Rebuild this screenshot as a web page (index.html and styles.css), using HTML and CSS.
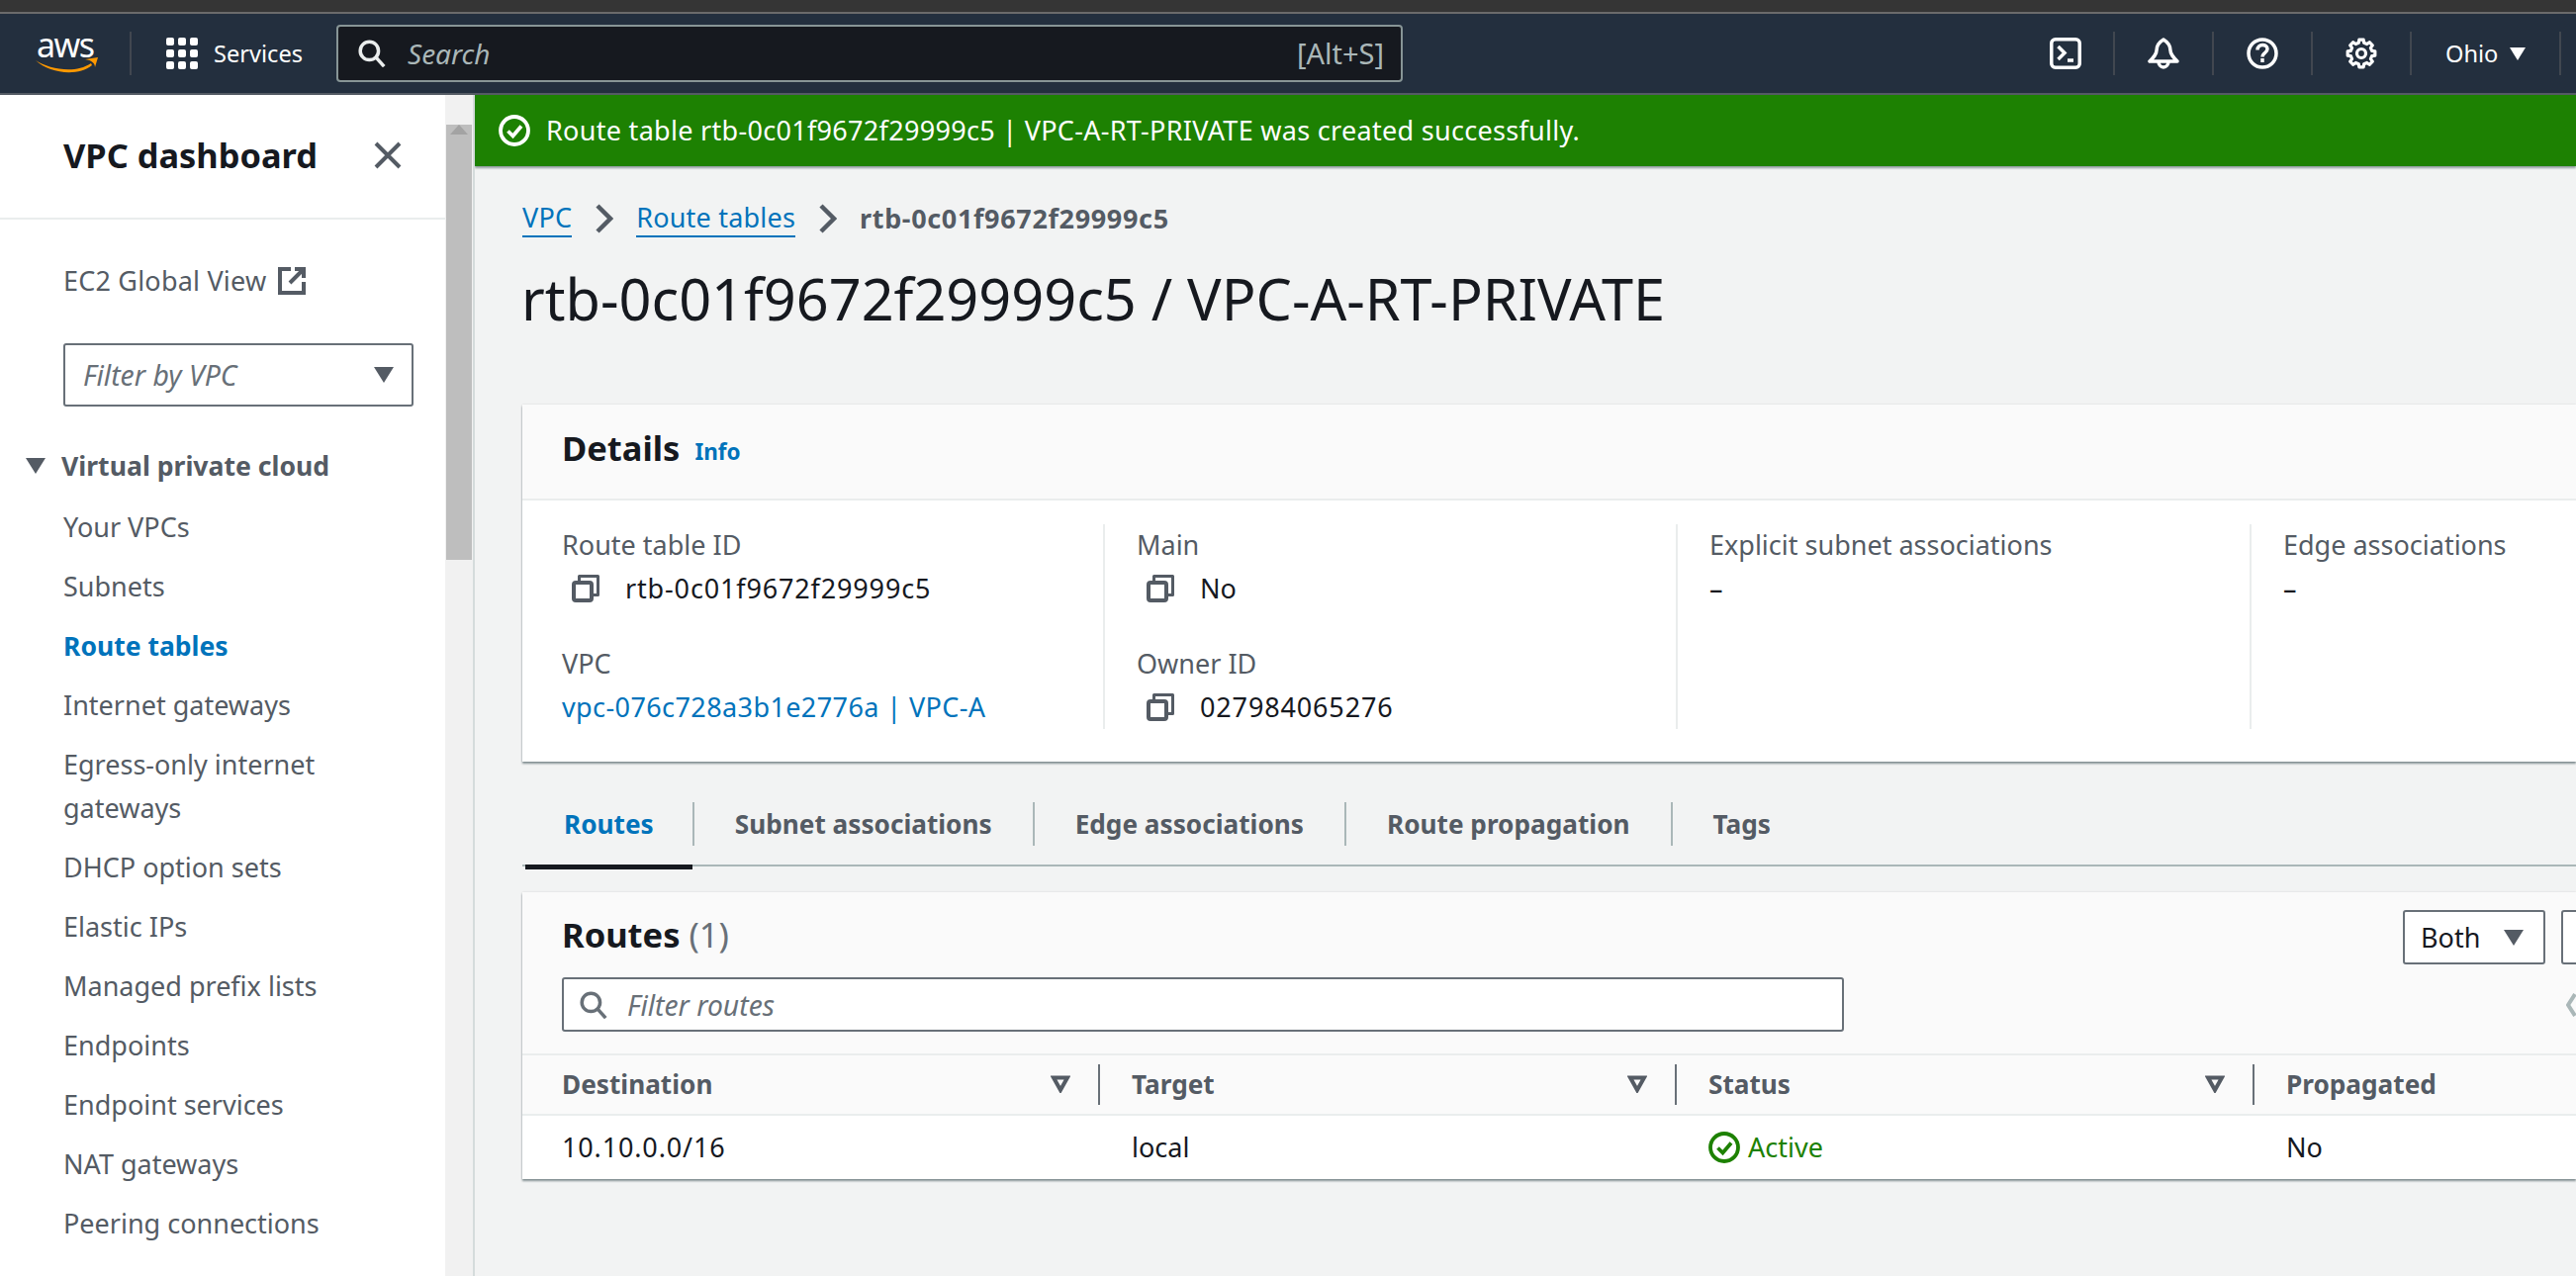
FILE: index.html
```html
<!DOCTYPE html>
<html lang="en">
<head>
  <meta charset="utf-8">
  <title>Route table - VPC-A-RT-PRIVATE</title>
  <link rel="stylesheet" href="styles.css">
</head>
<body>
  <div class="chrome-strip"></div>

  <!-- top navigation -->
  <header class="topnav">
    <div class="logo">
      <span class="logo-text">aws</span>
      <svg class="logo-smile" viewBox="0 0 64 16" fill="#f90"><path d="M0 3C14 12 40 17 56 6l1 2C42 20 14 16 0 3z"/><path d="M50 2l13-2-3 10c0-4-3-7-10-8z"/></svg>
    </div>
    <div class="services">
      <svg class="grid-icon" viewBox="0 0 32 32" fill="#fff">
        <rect x="0" y="0" width="8" height="8" rx="2"/><rect x="12" y="0" width="8" height="8" rx="2"/><rect x="24" y="0" width="8" height="8" rx="2"/>
        <rect x="0" y="12" width="8" height="8" rx="2"/><rect x="12" y="12" width="8" height="8" rx="2"/><rect x="24" y="12" width="8" height="8" rx="2"/>
        <rect x="0" y="24" width="8" height="8" rx="2"/><rect x="12" y="24" width="8" height="8" rx="2"/><rect x="24" y="24" width="8" height="8" rx="2"/>
      </svg>
      <span>Services</span>
    </div>
    <div class="nav-search">
      <svg class="search-icon" viewBox="0 0 32 32" fill="none" stroke="#eaeded" stroke-width="4"><circle cx="13" cy="13" r="10.500"/><path d="M21 21l9 10"/></svg>
      <span class="nav-search-text">Search</span>
      <span class="nav-search-key">[Alt+S]</span>
    </div>
    <div class="nav-right">
      <div class="nav-item nav-item-first">
        <svg viewBox="0 0 32 32" fill="none" stroke="#fff" stroke-width="3.500"><rect x="1.750" y="1.750" width="28.500" height="28.500" rx="4"/><path d="M8.500 9l6.500 6.500L8.500 22M18 23h6"/></svg>
      </div>
      <div class="nav-item">
        <svg viewBox="0 0 32 32" fill="none" stroke="#fff" stroke-width="3.500" stroke-linejoin="round"><path d="M16 2c-5 3-7 7-7 11 0 4-3 7-7 11h28c-4-4-7-7-7-11 0-4-2-8-7-11z"/><path d="M11 24a5 6 0 0 0 10 0"/></svg>
      </div>
      <div class="nav-item">
        <svg viewBox="0 0 32 32" fill="none" stroke="#fff" stroke-width="3.500"><circle cx="16" cy="16" r="14"/><path d="M11 12.500c0-6.500 10-6.500 10-1 0 4-5 4-5 8"/><path d="M16 21v4"/></svg>
      </div>
      <div class="nav-item">
        <svg viewBox="0 0 32 32" fill="none" stroke="#fff" stroke-width="3.200" stroke-linejoin="round">
          <circle cx="16" cy="16" r="4.500"/>
          <polygon transform="translate(16 16)" points="10.67,-2.66 13.83,-2.19 13.83,2.19 10.67,2.66 9.43,5.66 11.33,8.23 8.23,11.33 5.66,9.43 2.66,10.67 2.19,13.83 -2.19,13.83 -2.66,10.67 -5.66,9.43 -8.23,11.33 -11.33,8.23 -9.43,5.66 -10.67,2.66 -13.83,2.19 -13.83,-2.19 -10.67,-2.66 -9.43,-5.66 -11.33,-8.23 -8.23,-11.33 -5.66,-9.43 -2.66,-10.67 -2.19,-13.83 2.19,-13.83 2.66,-10.67 5.66,-9.43 8.23,-11.33 11.33,-8.23 9.43,-5.66"/>
        </svg>
      </div>
      <div class="nav-item nav-region">
        <span>Ohio</span>
        <svg class="caret" viewBox="0 0 16 14" fill="#fff"><path d="M0 1h16L8 14z"/></svg>
      </div>
    </div>
  </header>

  <div class="shell">
    <!-- side navigation -->
    <aside class="sidebar">
      <div class="side-head">
        <span class="side-title">VPC dashboard</span>
        <svg class="side-close" viewBox="0 0 28 28" fill="none" stroke="#545b64" stroke-width="4"><path d="M2 2l24 24M26 2L2 26"/></svg>
      </div>
      <div class="side-body">
        <div class="side-global">
          <span>EC2 Global View</span>
          <svg class="external-icon" viewBox="0 0 28 28" fill="none" stroke="#545b64" stroke-width="4"><path d="M13 2H2v24h24V15"/><path d="M12 16L26 2M17 2h9v9"/></svg>
        </div>
        <div class="side-select">
          <span>Filter by VPC</span>
          <svg class="side-caret" viewBox="0 0 20 16" fill="#545b64"><path d="M0 0h20L10 16z"/></svg>
        </div>
        <div class="side-section">
          <svg class="side-caret side-caret-section" viewBox="0 0 20 16" fill="#545b64"><path d="M0 0h20L10 16z"/></svg>
          <span>Virtual private cloud</span>
        </div>
        <ul class="side-list">
          <li>Your VPCs</li>
          <li>Subnets</li>
          <li class="active">Route tables</li>
          <li>Internet gateways</li>
          <li>Egress-only internet gateways</li>
          <li>DHCP option sets</li>
          <li>Elastic IPs</li>
          <li>Managed prefix lists</li>
          <li>Endpoints</li>
          <li>Endpoint services</li>
          <li>NAT gateways</li>
          <li>Peering connections</li>
        </ul>
      </div>
    </aside>

    <div class="scrollbar">
      <div class="scroll-up"></div>
      <div class="scroll-thumb"></div>
    </div>

    <main class="main">
      <div class="banner">
        <svg class="banner-icon" viewBox="0 0 32 32" fill="none" stroke="#fff" stroke-width="3.800"><circle cx="16" cy="16" r="14"/><path d="M9.500 16.500l5 5 8.500-10"/></svg>
        <span>Route table rtb-0c01f9672f29999c5 | VPC-A-RT-PRIVATE was created successfully.</span>
      </div>

      <div class="content">
        <nav class="crumbs">
          <a>VPC</a>
          <svg class="crumb-sep" viewBox="0 0 19 30" fill="none" stroke="#545b64" stroke-width="4.500"><path d="M3 2l13 13L3 28"/></svg>
          <a>Route tables</a>
          <svg class="crumb-sep" viewBox="0 0 19 30" fill="none" stroke="#545b64" stroke-width="4.500"><path d="M3 2l13 13L3 28"/></svg>
          <span class="crumb-current">rtb-0c01f9672f29999c5</span>
        </nav>

        <h1 class="page-title">rtb-0c01f9672f29999c5 / VPC-A-RT-PRIVATE</h1>

        <section class="card details">
          <div class="card-head details-head">
            <h2>Details</h2>
            <span class="info">Info</span>
          </div>
          <div class="details-body">
            <div class="details-col">
              <div class="field">
                <div class="field-label">Route table ID</div>
                <div class="field-value">
                  <svg class="copy-icon" viewBox="0 0 28 28"><use href="#copy"/></svg>
                  <span class="num">rtb-0c01f9672f29999c5</span>
                </div>
              </div>
              <div class="field">
                <div class="field-label">VPC</div>
                <div class="field-value field-link">vpc-076c728a3b1e2776a | VPC-A</div>
              </div>
            </div>
            <div class="details-col">
              <div class="field">
                <div class="field-label">Main</div>
                <div class="field-value">
                  <svg class="copy-icon" viewBox="0 0 28 28"><use href="#copy"/></svg>
                  <span>No</span>
                </div>
              </div>
              <div class="field">
                <div class="field-label">Owner ID</div>
                <div class="field-value">
                  <svg class="copy-icon" viewBox="0 0 28 28"><use href="#copy"/></svg>
                  <span class="num">027984065276</span>
                </div>
              </div>
            </div>
            <div class="details-col">
              <div class="field">
                <div class="field-label">Explicit subnet associations</div>
                <div class="field-value field-plain">–</div>
              </div>
            </div>
            <div class="details-col details-col-last">
              <div class="field">
                <div class="field-label">Edge associations</div>
                <div class="field-value field-plain">–</div>
              </div>
            </div>
          </div>
        </section>

        <div class="tabs">
          <div class="tab tab-active">Routes</div>
          <div class="tab">Subnet associations</div>
          <div class="tab">Edge associations</div>
          <div class="tab">Route propagation</div>
          <div class="tab tab-last">Tags</div>
        </div>

        <section class="card routes">
          <div class="routes-head">
            <div class="routes-top">
              <h2>Routes <span class="count">(1)</span></h2>
              <div class="routes-actions">
                <div class="small-select">
                  <span>Both</span>
                  <svg class="side-caret" viewBox="0 0 20 16" fill="#545b64"><path d="M0 0h20L10 16z"/></svg>
                </div>
                <div class="small-select small-select-cut"></div>
              </div>
            </div>
            <div class="routes-filter-row">
              <div class="filter">
                <svg class="filter-icon" viewBox="0 0 32 32" fill="none" stroke="#687078" stroke-width="4"><circle cx="13" cy="13" r="10.500"/><path d="M21 21l9 10"/></svg>
                <span>Filter routes</span>
              </div>
              <svg class="pager-prev" viewBox="0 0 10 26" fill="none" stroke="#aab7b8" stroke-width="4"><path d="M9 2L2 13l7 11"/></svg>
            </div>
          </div>
          <div class="table">
            <div class="th">
              <span>Destination</span>
              <svg class="sort-icon" viewBox="0 0 20 18" fill="none" stroke="#545b64" stroke-width="4"><path d="M3 2.500h14L10 15z"/></svg>
            </div>
            <div class="th">
              <span>Target</span>
              <svg class="sort-icon" viewBox="0 0 20 18" fill="none" stroke="#545b64" stroke-width="4"><path d="M3 2.500h14L10 15z"/></svg>
            </div>
            <div class="th">
              <span>Status</span>
              <svg class="sort-icon" viewBox="0 0 20 18" fill="none" stroke="#545b64" stroke-width="4"><path d="M3 2.500h14L10 15z"/></svg>
            </div>
            <div class="th th-last"><span>Propagated</span></div>
            <div class="td"><span class="num">10.10.0.0/16</span></div>
            <div class="td">local</div>
            <div class="td td-status">
              <svg class="status-icon" viewBox="0 0 32 32" fill="none" stroke="#1d8102" stroke-width="3.800"><circle cx="16" cy="16" r="14"/><path d="M9.500 16.500l5 5 8.500-10"/></svg>
              <span>Active</span>
            </div>
            <div class="td">No</div>
          </div>
        </section>
      </div>
    </main>
  </div>

  <!-- shared copy icon -->
  <svg class="defs" width="0" height="0">
    <symbol id="copy" viewBox="0 0 28 28">
      <rect x="2" y="8" width="18" height="18" rx="2" fill="none" stroke="#545b64" stroke-width="4"/>
      <path d="M7.500 6V1.500h19v19H22" fill="none" stroke="#545b64" stroke-width="3" stroke-linejoin="round"/>
    </symbol>
  </svg>
</body>
</html>
```
FILE: styles.css
```css
* { box-sizing: border-box; }
html, body { margin: 0; padding: 0; }
body {
  width: 2604px;
  height: 1290px;
  overflow: hidden;
  background: #f2f3f3;
  color: #16191f;
  font-family: "Noto Sans", "Open Sans", sans-serif;
  font-size: 27px;
  line-height: 44px;
}
h1, h2, ul { margin: 0; padding: 0; font-weight: 700; }
.defs { position: absolute; }
.num { letter-spacing: .85px; }

.chrome-strip { height: 14px; background: #353535; border-bottom: 2px solid #6b6b6b; }

/* top navigation */
.topnav {
  height: 82px;
  display: flex;
  align-items: center;
  background: #232f3e;
  border-bottom: 2px solid #545b64;
  color: #fff;
  font-size: 23.600px;
}
.logo {
  width: 133px;
  height: 44px;
  padding-left: 37px;
  border-right: 2px solid #414750;
  display: flex;
  flex-direction: column;
  flex-shrink: 0;
}
.logo-text { font-size: 34px; line-height: 26px; height: 26px; letter-spacing: -1.500px; }
.logo-smile { width: 64px; height: 16px; margin-left: -1px; }
.services { display: flex; align-items: center; margin-left: 35px; width: 172px; flex-shrink: 0; }
.grid-icon { width: 32px; height: 32px; margin-right: 16px; }
.nav-search {
  width: 1078px;
  height: 58px;
  display: flex;
  align-items: center;
  padding: 0 17px 0 20px;
  background: #16191f;
  border: 2px solid #879596;
  border-radius: 4px;
  flex-shrink: 0;
}
.search-icon { width: 28px; height: 28px; margin-right: 22px; }
.nav-search-text { font-style: italic; color: #aab7b8; font-size: 28px; flex: 1; }
.nav-search-key { color: #aab7b8; font-size: 29px; }
.nav-right { margin-left: auto; display: flex; align-items: center; margin-right: 15px; }
.nav-item {
  width: 100px;
  height: 44px;
  display: flex;
  align-items: center;
  justify-content: center;
  border-left: 2px solid #414750;
}
.nav-item svg { width: 32px; height: 32px; }
.nav-item-first { border-left: 0; width: 70px; justify-content: flex-start; padding-left: 6px; }
.nav-region { width: 153px; justify-content: flex-start; padding-left: 34px; border-right: 2px solid #414750; }
.nav-region .caret { width: 16px; height: 14px; margin-left: 12px; }

/* page shell */
.shell { display: flex; height: 1194px; }

/* side navigation */
.sidebar { width: 450px; flex-shrink: 0; background: #fff; color: #545b64; overflow: hidden; }
.side-head {
  height: 126px;
  padding: 0 44px 2px 64px;
  display: flex;
  align-items: center;
  justify-content: space-between;
  border-bottom: 2px solid #eaeded;
}
.side-title { font-size: 34.400px; font-weight: 700; color: #16191f; }
.side-close { width: 28px; height: 28px; }
.side-body { padding: 40px 32px 0 64px; }
.side-global { display: flex; align-items: center; height: 44px; letter-spacing: .2px; }
.external-icon { width: 28px; height: 28px; margin-left: 12px; }
.side-select {
  margin-top: 41px;
  height: 64px;
  width: 354px;
  padding: 0 18px;
  display: flex;
  align-items: center;
  justify-content: space-between;
  border: 2px solid #687078;
  border-radius: 3px;
  font-style: italic;
  font-size: 28.400px;
  color: #687078;
}
.side-caret { width: 20px; height: 16px; flex-shrink: 0; }
.side-section {
  margin: 38px 0 0 -38px;
  height: 44px;
  display: flex;
  align-items: center;
  font-weight: 700;
  font-size: 26.600px;
}
.side-caret-section { margin-right: 16px; }
.side-list { list-style: none; margin-top: 10px; font-weight: 400; }
.side-list li { padding: 8px 0; }
.side-list .active { color: #0073bb; font-weight: 700; font-size: 26.500px; }

.scrollbar { width: 30px; flex-shrink: 0; background: #f1f1f1; border-right: 2px solid #d5dbdb; }
.scroll-up {
  height: 30px;
  width: 0;
  margin: 0 auto;
  border: 9px solid transparent;
  border-top: 0;
  border-bottom: 10px solid #a3a3a3;
  transform: translateY(10px);
}
.scroll-thumb { width: 26px; margin: 0 0 0 1px; height: 440px; background: #bebebe; }

/* main */
.main { flex: 1; min-width: 0; overflow: hidden; }
.banner {
  height: 72px;
  display: flex;
  align-items: center;
  padding-left: 24px;
  background: #1d8102;
  color: #fff;
  letter-spacing: .3px;
  box-shadow: 0 2px 2px rgba(0, 28, 36, .4);
}
.banner-icon { width: 32px; height: 32px; margin-right: 16px; }
.content { padding: 31px 0 0 48px; width: 2124px; }
a { color: #0073bb; text-decoration: none; border-bottom: 2px solid #0073bb; line-height: 36px; letter-spacing: .2px; }
.crumbs { display: flex; align-items: center; height: 44px; }
.crumb-sep { width: 19px; height: 30px; margin: 0 23px; }
.crumb-current { color: #545b64; font-weight: 700; letter-spacing: .65px; }
.page-title { font-size: 57.600px; line-height: 64px; font-weight: 400; margin-top: 27px; white-space: nowrap; margin-left: -1px; }

.card { background: #fff; box-shadow: 0 2px 2px rgba(0, 28, 36, .45), 0 0 2px rgba(0, 28, 36, .12); }
.details { margin-top: 75px; height: 361px; }
.card-head { background: #fafafa; border-bottom: 2px solid #eaeded; }
.details-head { height: 97px; padding: 0 40px 8px; display: flex; align-items: center; }
h2 { font-size: 34.500px; line-height: 52px; }
.info { color: #0073bb; font-size: 22.500px; font-weight: 700; margin: 8px 0 0 15px; }
.details-body { display: grid; grid-template-columns: 589px 579px 580px 1fr; padding-top: 24px; }
.details-col { height: 207px; padding-left: 32px; border-right: 2px solid #eaeded; }
.details-col:first-child { padding-left: 40px; }
.details-col-last { border-right: 0; }
.field { height: 120px; }
.field-label { color: #545b64; height: 43px; line-height: 42px; }
.field-value { display: flex; align-items: center; height: 44px; padding-left: 10px; }
.field-plain { padding-left: 0; }
.field-link { padding-left: 0; color: #0073bb; letter-spacing: .4px; }
.copy-icon { width: 28px; height: 28px; margin-right: 26px; }

/* tabs */
.tabs { display: flex; margin-top: 20px; height: 86px; padding: 2px 0 0 3px; border-bottom: 2px solid #aab7b8; align-items: center; }
.tab { height: 44px; padding: 0 41px; font-weight: 700; font-size: 26.200px; color: #545b64; border-right: 2px solid #aab7b8; white-space: nowrap; }
.tab-last { border-right: 0; }
.tab-active { padding: 0 39px; color: #0073bb; position: relative; }
.tab-active::after { content: ""; position: absolute; left: 0; right: 0; bottom: -24px; height: 5px; background: #16191f; }

/* routes table */
.routes { margin-top: 26px; }
.routes-head { height: 163px; background: #fafafa; padding: 0 0 0 40px; }
.routes-top { height: 86px; display: flex; align-items: center; justify-content: space-between; }
.count { font-weight: 400; color: #687078; }
.routes-actions { display: flex; gap: 16px; margin: 5px -65px 0 0; }
.small-select {
  width: 144px;
  height: 55px;
  padding: 0 20px 0 16px;
  display: flex;
  align-items: center;
  justify-content: space-between;
  background: #fff;
  border: 2px solid #687078;
  border-radius: 3px;
}
.small-select-cut { width: 80px; }
.routes-filter-row { display: flex; align-items: center; }
.filter {
  width: 1297px;
  height: 55px;
  padding: 0 16px;
  display: flex;
  align-items: center;
  background: #fff;
  border: 2px solid #687078;
  border-radius: 3px;
  font-style: italic;
  font-size: 28.300px;
  color: #687078;
}
.filter-icon { width: 28px; height: 28px; margin-right: 20px; }
.pager-prev { width: 10px; height: 26px; margin-left: 730px; }
.table { display: grid; grid-template-columns: 584px 583px 584px 1fr; }
.th {
  height: 63px;
  padding: 0 30px 2px 32px;
  display: flex;
  align-items: center;
  justify-content: space-between;
  background: #fafafa;
  border-top: 2px solid #eaeded;
  border-bottom: 2px solid #eaeded;
  color: #545b64;
  font-weight: 700;
  font-size: 26.200px;
  position: relative;
}
.th:first-child { padding-left: 40px; }
.th::after { content: ""; position: absolute; right: 0; top: 9px; bottom: 9px; width: 2px; background: #687078; }
.th-last::after { display: none; }
.sort-icon { width: 20px; height: 18px; }
.td { height: 64px; padding: 0 32px; display: flex; align-items: center; }
.td:nth-child(5) { padding-left: 40px; }
.td-status { color: #1d8102; }
.status-icon { width: 32px; height: 32px; margin-right: 8px; }
```
